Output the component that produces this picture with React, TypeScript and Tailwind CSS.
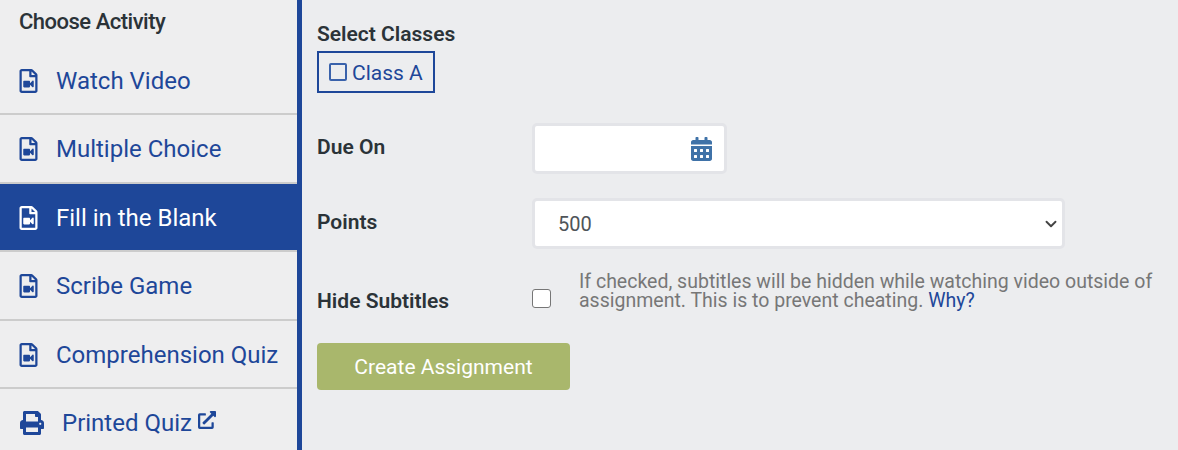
import React from 'react';
import { FaRegFileVideo, FaPrint, FaExternalLinkAlt, FaCalendarAlt } from 'react-icons/fa';
import { ChevronDown } from 'lucide-react';

const ACTIVITIES = [
  { label: 'Watch Video', height: 'h-[67px] pt-[2px]' },
  { label: 'Multiple Choice', height: 'h-[67px]' },
  { label: 'Fill in the Blank', height: 'h-[66px] pt-[2px]', active: true },
  { label: 'Scribe Game', height: 'h-[67px]' },
  { label: 'Comprehension Quiz', height: 'h-[66px] pt-[2px]' },
];

const App: React.FC = () => {
  return (
    <div className="flex h-[450px] w-[1178px] overflow-hidden bg-[#ecedef] font-['Roboto',sans-serif]">
      {/* Sidebar */}
      <aside className="h-full w-[302px] shrink-0 border-r-[5px] border-[#1e4799] bg-[#eeeeef]">
        <h2 className="h-[46px] pl-[19px] pt-[8px] text-[22px] leading-[28px] font-medium tracking-[-0.5px] text-[#2b3338]">
          Choose Activity
        </h2>
        {ACTIVITIES.map((item) => (
          <div
            key={item.label}
            className={
              item.active
                ? `flex ${item.height} items-center bg-[#1e4799] pl-[19px] text-white`
                : `flex ${item.height} items-center pl-[19px] text-[#1e4799]`
            }
          >
            <FaRegFileVideo className="h-[24px] w-[19px] shrink-0" />
            <span className="ml-[18px] text-[24px] leading-none">{item.label}</span>
          </div>
        )).flatMap((row, i) => [
          row,
          <div key={`divider-${i}`} className="h-[2px] bg-[#cccccc]" />,
        ])}
        <div className="flex h-[61px] items-center pl-[20px] pt-[6px] text-[#1e4799]">
          <FaPrint className="h-[24px] w-[24px] shrink-0" />
          <span className="ml-[18px] text-[24px] leading-none">Printed Quiz</span>
          <FaExternalLinkAlt className="mb-[6px] ml-[6px] h-[18px] w-[18px] shrink-0" />
        </div>
      </aside>

      {/* Form */}
      <main className="flex-1 pl-[15px] pt-[22px]">
        <div className="text-[21px] leading-[24px] font-semibold text-[#2b3338]">Select Classes</div>
        <div className="mt-[5px] flex h-[42px] w-[118px] items-center border-2 border-[#1e4799] pl-[10px] text-[#1e4799]">
          <div className="h-[18px] w-[18px] shrink-0 rounded-[2px] border-2 border-[#3a62ab]" />
          <span className="ml-[5px] pt-[2px] text-[21px] leading-none">Class A</span>
        </div>

        <div className="mt-[30px] flex items-center">
          <label className="w-[215px] shrink-0 pb-[1px] text-[21px] font-semibold text-[#2b3338]">Due On</label>
          <div className="flex h-[51px] w-[195px] items-center justify-end rounded-[5px] border-[3px] border-[#e3e4e8] bg-white pr-[12px]">
            <FaCalendarAlt className="h-[24px] w-[21px] text-[#3f72a8]" />
          </div>
        </div>

        <div className="mt-[24px] flex items-center">
          <label className="w-[215px] shrink-0 pb-[1px] text-[21px] font-semibold text-[#2b3338]">Points</label>
          <div className="flex h-[51px] w-[533px] items-center justify-between rounded-[5px] border-[3px] border-[#e3e4e8] bg-white pl-[23px] pr-[2px]">
            <span className="text-[20px] text-[#4f5459]">500</span>
            <ChevronDown className="h-[18px] w-[18px] text-[#444444]" strokeWidth={2.5} />
          </div>
        </div>

        <div className="mt-[23px] flex items-start">
          <label className="w-[215px] shrink-0 pt-[17px] text-[21px] leading-[24px] font-semibold text-[#2b3338]">Hide Subtitles</label>
          <div className="mt-[17px] h-[19px] w-[19px] shrink-0 rounded-[3px] border border-[#767676] bg-white" />
          <p className="ml-[28px] w-[590px] text-[19.5px] leading-[19px] text-[#777777]">
            If checked, subtitles will be hidden while watching video outside of assignment. This is to prevent cheating.{' '}
            <span className="text-[#1e4799]">Why?</span>
          </p>
        </div>

        <button className="mt-[30px] h-[47px] w-[253px] rounded-[4px] bg-[#a9b76c] pt-[2px] text-[21px] text-white">
          Create Assignment
        </button>
      </main>
    </div>
  );
};

export default App;
